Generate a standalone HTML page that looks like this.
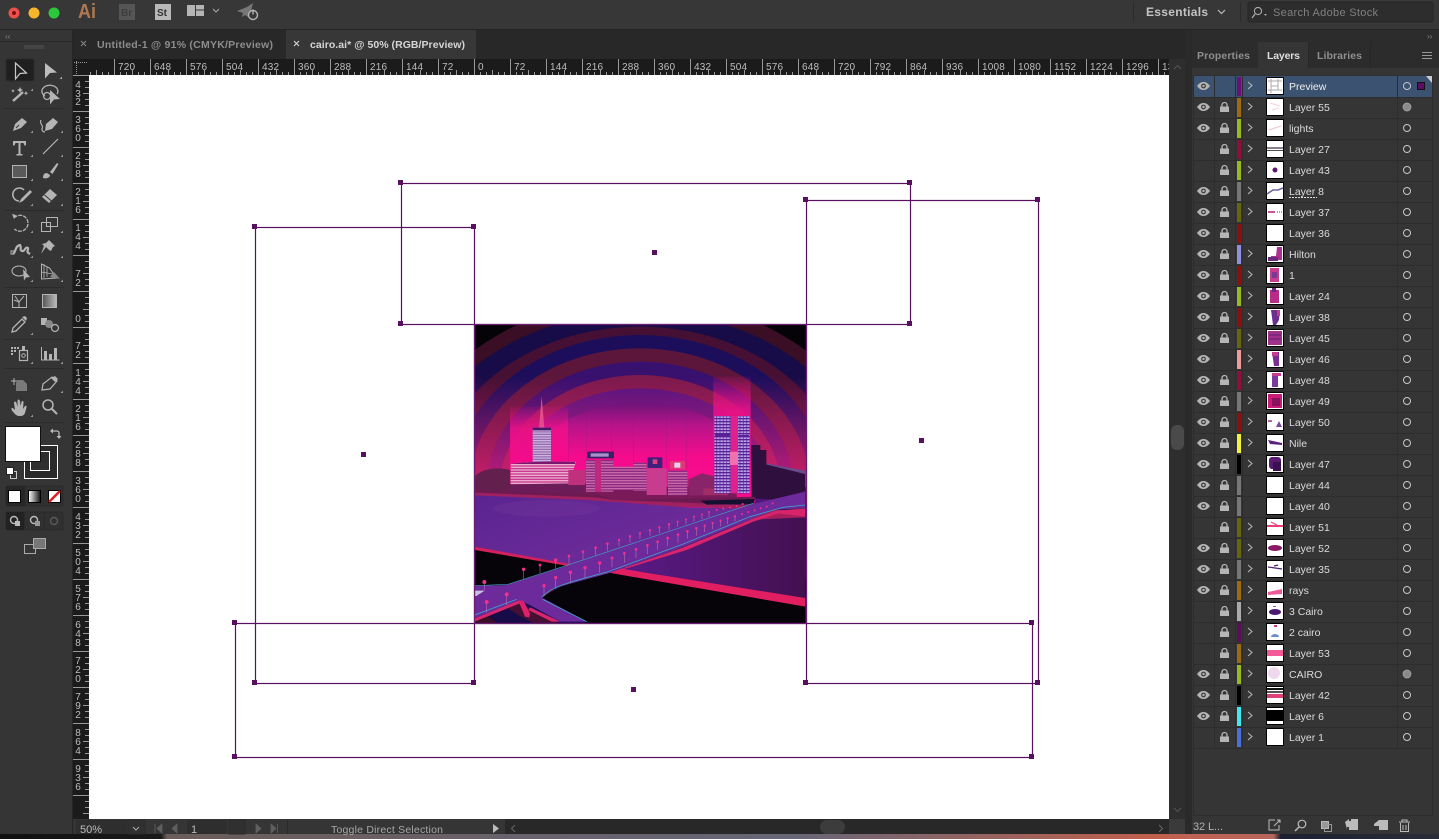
<!DOCTYPE html>
<html><head><meta charset="utf-8"><title>cairo.ai</title>
<style>html,body{margin:0;padding:0;background:#2a2a2a;overflow:hidden}svg{display:block}text{font-family:"Liberation Sans",sans-serif}</style></head>
<body>
<svg width="1439" height="839" viewBox="0 0 1439 839" xmlns="http://www.w3.org/2000/svg">
<defs>
<linearGradient id="desk" x1="0" x2="1" y1="0" y2="0"><stop offset="0" stop-color="#111"/><stop offset=".112" stop-color="#1a1a1a"/><stop offset=".116" stop-color="#6b5d5a"/><stop offset=".55" stop-color="#667"/><stop offset=".8" stop-color="#c0604c"/><stop offset=".885" stop-color="#b8655c"/><stop offset=".89" stop-color="#1c2030"/><stop offset="1" stop-color="#2a2c38"/></linearGradient>
<linearGradient id="grey" x1="0" x2="1" y1="0" y2="0"><stop offset="0" stop-color="#555"/><stop offset="1" stop-color="#bbb"/></linearGradient>
<linearGradient id="mg" x1="0" x2="1" y1="0" y2="0"><stop offset="0" stop-color="#fff"/><stop offset="1" stop-color="#111"/></linearGradient>
<linearGradient id="water" x1="0" x2="1" y1="0" y2="1"><stop offset="0" stop-color="#5a2490"/><stop offset=".5" stop-color="#6a2a98"/><stop offset="1" stop-color="#64187f"/></linearGradient>
<linearGradient id="water2" x1="0" x2="1" y1="0" y2="0"><stop offset="0" stop-color="#5a1a88"/><stop offset="1" stop-color="#431050"/></linearGradient>
<linearGradient id="beam" x1="0" x2="0" y1="0" y2="1"><stop offset="0" stop-color="#f0108a" stop-opacity=".1"/><stop offset=".35" stop-color="#f0108a" stop-opacity=".85"/><stop offset="1" stop-color="#f8088c"/></linearGradient>
<linearGradient id="glow" x1="0" x2="0" y1="0" y2="1"><stop offset="0" stop-color="#6a1478"/><stop offset=".14" stop-color="#b8148a"/><stop offset=".32" stop-color="#f40c8c"/><stop offset="1" stop-color="#ff0a90"/></linearGradient>
<linearGradient id="lift" x1="0" x2="0" y1="0" y2="1"><stop offset="0" stop-color="#e8207a" stop-opacity="0"/><stop offset="1" stop-color="#e8207a" stop-opacity=".8"/></linearGradient>
<pattern id="st1" width="4" height="5" patternUnits="userSpaceOnUse"><rect width="4" height="5" fill="#8a5aa8"/><rect y="0" width="4" height="2.5" fill="#d8c4e6"/></pattern>
<pattern id="st2" width="4" height="8" patternUnits="userSpaceOnUse"><rect width="4" height="8" fill="#c83c90"/><rect y="0" width="4" height="4" fill="#eeaccf"/></pattern>
<pattern id="st3" width="4" height="8" patternUnits="userSpaceOnUse"><rect width="4" height="8" fill="#8a2a80"/><rect y="0" width="4" height="4" fill="#cc68a8"/></pattern>
<pattern id="win" width="10" height="9" patternUnits="userSpaceOnUse"><rect width="10" height="9" fill="#5a2098"/><rect x="1" y="1" width="8" height="5" fill="#b8a4e4"/></pattern>
<pattern id="tickT" x="114" y="59" width="36" height="16" patternUnits="userSpaceOnUse"><path d="M.5 0V16M6.500 13V16M12.500 13V16M18.500 11V16M24.500 13V16M30.500 13V16" stroke="#999" fill="none"/></pattern>
<pattern id="tickL" x="73" y="75" width="16" height="36" patternUnits="userSpaceOnUse"><path d="M0 .5H16M12 6.500H16M12 12.500H16M10 18.500H16M12 24.500H16M12 30.500H16" stroke="#999" fill="none"/></pattern>
<clipPath id="artc"><rect x="475" y="325" width="331" height="298"/></clipPath>
<clipPath id="rulc"><rect x="89" y="59" width="1080" height="16"/></clipPath>
<clipPath id="rullc"><rect x="73" y="75" width="16" height="744"/></clipPath>
<symbol id="eye" viewBox="0 0 13 8" overflow="visible"><path d="M0 4C2.500 .6 4.600 0 6.500 0S10.500 .6 13 4C10.500 7.400 8.400 8 6.500 8S2.500 7.400 0 4Z" fill="#b5b5b5"/><circle cx="6.500" cy="4" r="2.400" fill="#3a3a3a"/><circle cx="6.500" cy="4" r="1.200" fill="#b5b5b5"/></symbol>
<symbol id="lock" viewBox="0 0 9 10" overflow="visible"><path d="M2 5V3a2.500 2.500 0 0 1 5 0V5" fill="none" stroke="#b5b5b5" stroke-width="1.300"/><rect x="0" y="4.500" width="9" height="5.500" fill="#b5b5b5"/></symbol>
</defs>

<rect width="1439" height="839" fill="#2a2a2a"/>
<!-- top bar -->
<rect width="1439" height="29" fill="#373737"/>
<rect y="29" width="1439" height="1" fill="#252525"/>
<circle cx="14" cy="13" r="5.500" fill="#f0504c"/><circle cx="14" cy="13" r="2" fill="#7a1010"/>
<circle cx="34" cy="13" r="5.500" fill="#f7b52c"/>
<circle cx="54" cy="13" r="5.500" fill="#2cc83c"/>
<text x="78" y="18" font-size="20" font-weight="bold" fill="#b07850" textLength="18" lengthAdjust="spacingAndGlyphs">Ai</text>
<rect x="119" y="4" width="16" height="16" fill="#555"/><text x="121" y="16" font-size="10" font-weight="bold" fill="#3c3c3c">Br</text>
<rect x="155" y="4" width="16" height="16" fill="#b8b8b8"/><text x="157" y="16" font-size="10" font-weight="bold" fill="#333">St</text>
<path d="M187 5h8v11h-8zM196 5h8v4.500h-8zM196 10.500h8v5.500h-8z" fill="#b5b5b5"/>
<path d="M213 9l3 3 3-3" fill="none" stroke="#aaa" stroke-width="1.100"/>
<path d="M237 11l10-4 6-4-2 8-3 6-3-2-3 2 1-4z" fill="#777"/>
<circle cx="253" cy="15" r="4.500" fill="#373737" stroke="#b5b5b5" stroke-width="1.400"/><path d="M253 9.500v5" stroke="#b5b5b5" stroke-width="1.400"/>
<rect x="1133" y="2" width="1" height="20" fill="#2c2c2c"/>
<text x="1146" y="16" font-size="12" font-weight="bold" fill="#c4c4c4" textLength="62">Essentials</text>
<path d="M1218 10l3.500 3.500 3.500-3.500" fill="none" stroke="#bbb" stroke-width="1.200"/>
<rect x="1240" y="2" width="1" height="20" fill="#2c2c2c"/>
<rect x="1248" y="2" width="185" height="20" rx="2" fill="#2d2d2d" stroke="#262626"/>
<circle cx="1258" cy="11" r="3.600" fill="none" stroke="#aaa" stroke-width="1.100"/><path d="M1255 14l-3 4" stroke="#aaa" stroke-width="1.300"/><path d="M1264 14h3l-1.500 2z" fill="#aaa"/>
<text x="1273" y="16" font-size="11" fill="#808080" textLength="105">Search Adobe Stock</text>

<!-- tab strip -->
<rect x="73" y="30" width="1112" height="29" fill="#282828"/>
<rect x="286" y="30" width="190" height="29" fill="#373737"/>
<path d="M81 41l5 5M86 41l-5 5" stroke="#888" stroke-width="1"/>
<text x="97" y="48" font-size="10.500" font-weight="bold" fill="#8d8d8d" textLength="176">Untitled-1 @ 91% (CMYK/Preview)</text>
<path d="M294 41l5 5M299 41l-5 5" stroke="#ddd" stroke-width="1"/>
<text x="310" y="48" font-size="10.500" font-weight="bold" fill="#d6d6d6" textLength="155">cairo.ai* @ 50% (RGB/Preview)</text>

<!-- left toolbar -->
<rect y="30" width="72" height="804" fill="#353535"/>
<rect x="72" y="30" width="1" height="804" fill="#262626"/>
<rect y="41" width="72" height="1" fill="#2a2a2a"/>
<text x="5" y="39" font-size="8" fill="#888">‹‹</text>
<path d="M25 45v4M27 45v4M29 45v4M31 45v4M33 45v4M35 45v4M37 45v4M39 45v4M41 45v4M43 45v4" stroke="#555" stroke-width="1"/>
<rect x="6" y="59" width="28" height="22" rx="2" fill="#1f1f1f" stroke="#2a2a2a"/>
<path d="M15.500 63L26.500 73 20 73.500 15.500 79Z" fill="none" stroke="#c8c8c8" stroke-width="1.200"/>
<path d="M45 63L57 72.500 50 73 45 78.500Z" fill="#bdbdbd"/><path d="M62 79h-2.500l2.500-2.500z" fill="#aaa"/>
<g fill="#b4b4b4" stroke="#b4b4b4">
<path d="M13 101l10-9" stroke-width="2.500" fill="none"/>
<path d="M20 87l1 2 2 1-2 1-1 2-1-2-2-1 2-1zM26 91l.7 1.500 1.500.7-1.500.7-.7 1.500-.7-1.500-1.500-.7 1.500-.7zM13 89l.6 1.300 1.300.6-1.300.6-.6 1.300-.6-1.300-1.300-.6 1.300-.6z" stroke="none"/>
<path d="M45 96a8 6 0 1 1 12-2" fill="none" stroke-width="1.300"/><circle cx="47" cy="96" r="3.500" fill="none" stroke-width="1.200"/>
<path d="M50 90l10 9-6 .5-4 5z" stroke="none"/>
<path d="M13 131l2-7 7-6 5 4-6 6-8 3z" stroke="none"/><path d="M16 128l3-3" stroke="#353535" stroke-width="1" fill="none"/>
<path d="M45 131l1-7 7-6 5 4-6 7-7 2z" stroke="none"/><path d="M41 120c-2 5 3 4 1 9 0 2 1 3 3 3" fill="none" stroke-width="1.200"/>
<path d="M13 141h13v4.500h-1.500l-1-2.500h-3v11h2v1.500h-6V154h2V143h-3l-1 2.500H13z" stroke="none"/>
<path d="M43 154l15-15" stroke-width="1.200" fill="none"/>
<rect x="12.500" y="165.500" width="14" height="12" fill="#5a5a5a"/>
<path d="M43 178c0-3 1-5 4-5l3 2c0 3-4 4-7 3z" stroke="none"/><path d="M50 172l7-9 1.500 1-6 10z" stroke="none"/>
<path d="M24 190a6.500 6.500 0 1 0-5 11" fill="none" stroke-width="1.600"/><path d="M19 203l2-4 9-9 2 2-9 9z" stroke="none"/>
<path d="M42 197l8-8 7 6-8 8z" stroke="none"/><path d="M44.500 195l7 6" stroke="#353535"/>
<path d="M14 218a8 8 0 1 1 .5 11" fill="none" stroke-width="1.300" stroke-dasharray="4 1"/><path d="M12 214l4 1-2 4z" stroke="none"/>
<rect x="41.500" y="222.500" width="9" height="9" fill="none"/><rect x="46.500" y="217.500" width="11" height="9" fill="none"/>
<path d="M13 254c3-2 2-8 7-9 2 3-1 5 2 6s3-5 6-3c1 3-3 3 2 6" fill="none" stroke-width="2.200"/><rect x="11" y="251" width="3" height="3" fill="none"/>
<path d="M49 240l6 6-2 1-2 4-2-1-3-3-5 7 3-8-2-2 4-1z" stroke="none"/>
<ellipse cx="19" cy="271" rx="7" ry="5" fill="none" stroke-width="1.100"/><path d="M23 269l7 8-4 .5-2 3z" stroke="none"/>
<path d="M41.500 264v15l15-1-7-10z" fill="none" stroke-width="1"/><path d="M44 264v14M47 267v10M41 272l12 2" fill="none" stroke-width=".8"/><path d="M50 277l4-5 6 7z" stroke="none" fill="#888"/>
</g>
<rect x="12.500" y="294.500" width="14" height="13" fill="none" stroke="#b4b4b4"/><path d="M14 300l5 2 5-6M19 302v5M15 296l4 6" stroke="#b4b4b4" fill="none"/>
<rect x="42.500" y="294.500" width="14" height="13" fill="url(#grey)" stroke="#b4b4b4"/>
<g fill="#b4b4b4" stroke="#b4b4b4">
<path d="M12 332l1-4 9-9 3 3-9 9z" fill="none" stroke-width="1.300"/><path d="M22 317l3-1 2 2-1 3z" stroke="none"/>
<rect x="41" y="318" width="6" height="7" stroke="none"/><circle cx="49" cy="324" r="4" stroke="none" fill="#888"/><circle cx="55" cy="328" r="3.500" fill="#353535" stroke-width="1.200"/>
<path d="M11 347h2v2h-2zM14 347h2v2h-2zM17 347h2v2h-2zM11 350h2v2h-2zM14 350h2v2h-2zM11 353h2v2h-2z" stroke="none"/>
<rect x="19.500" y="350.500" width="8" height="10" fill="#353535" stroke-width="1.200"/><circle cx="23.500" cy="355.500" r="1.800" fill="none"/><rect x="22" y="346" width="3" height="4" stroke="none"/>
<path d="M41.500 347v13h18" fill="none"/><path d="M44 351h3v9h-3zM49 354h3v6h-3zM54 348h3v12h-3z" stroke="none"/>
<path d="M11 381h7M14 378v7" fill="none" stroke-width="1"/><path d="M18 380h5l4 4v7h-11v-8z" stroke="none" fill="#7a7a7a"/>
<path d="M42 390l1-6 9-7 5 4-7 8z" fill="none" stroke-width="1.200"/><path d="M51 378l4-2 3 3-3 3z" stroke="none"/>
<path d="M14 413c-3-3-3-5-2-5s2 1 3 2l-1-7c0-2 2-2 2.500 0l1 4 0-6c0-2 2-2 2.500 0l.5 5 1-4c.5-2 2.500-1 2 1l-.5 6 2-3c1-1 2 0 1.500 1.500L25 413c-1 2-2 3-5 3s-4-1-6-3z" stroke="none"/>
<circle cx="48" cy="405" r="5" fill="none" stroke-width="1.500"/><path d="M52 409l5 5" stroke-width="2" fill="none"/>
</g>
<g fill="#999"><path d="M33 91h-2.500l2.500-2.500zM33 133h-2.500l2.500-2.500zM63 133h-2.500l2.500-2.500zM33 157h-2.500l2.500-2.500zM63 157h-2.500l2.500-2.500zM33 181h-2.500l2.500-2.500zM63 181h-2.500l2.500-2.500zM33 206h-2.500l2.500-2.500zM63 206h-2.500l2.500-2.500zM33 233h-2.500l2.500-2.500zM63 233h-2.500l2.500-2.500zM33 258h-2.500l2.500-2.500zM63 258h-2.500l2.500-2.500zM33 282h-2.500l2.500-2.500zM63 282h-2.500l2.500-2.500zM33 335h-2.500l2.500-2.500zM33 364h-2.500l2.500-2.500zM63 364h-2.500l2.500-2.500zM63 393h-2.500l2.500-2.500zM33 417h-2.500l2.500-2.500z"/></g>
<path d="M4 108.500h60M4 210.500h60M4 287.500h60M4 339.500h60M4 368.500h60M4 422.500h60" stroke="#2b2b2b"/>
<!-- swatches -->
<rect x="24.500" y="445.500" width="33" height="33" fill="#2a2a2a" stroke="#fff" stroke-width="1"/>
<rect x="30.500" y="451.500" width="19" height="19" fill="#2f2f2f" stroke="#fff"/>
<rect x="5.500" y="426.500" width="35" height="35" fill="#fff" stroke="#111"/>
<path d="M51 431h6a2 2 0 0 1 2 2v4" fill="none" stroke="#bbb" stroke-width="1.300"/><path d="M50 431l3-2.500v5zM59 439l-2.500-3h5z" fill="#bbb"/>
<rect x="10.500" y="471.500" width="6" height="7" fill="none" stroke="#ccc"/><rect x="6.500" y="467.500" width="7" height="7" fill="#fff" stroke="#222"/>
<rect x="6" y="486" width="57" height="20" rx="2" fill="#303030" stroke="#2a2a2a"/>
<rect x="6" y="486" width="19" height="20" fill="#262626"/>
<rect x="8.500" y="490.500" width="12" height="12" fill="#fff" stroke="#000"/>
<rect x="28.500" y="490.500" width="12" height="12" fill="url(#mg)" stroke="#000"/>
<rect x="48.500" y="490.500" width="12" height="12" fill="#fff" stroke="#000"/><path d="M49 502l11-11" stroke="#e02020" stroke-width="2.500"/>
<rect x="6" y="512" width="57" height="18" rx="2" fill="#303030" stroke="#2a2a2a"/>
<rect x="6" y="512" width="18" height="18" fill="#222"/>
<path d="M24.500 512v18M44.500 512v18" stroke="#2a2a2a"/>
<circle cx="14" cy="520" r="3.500" fill="none" stroke="#bbb" stroke-width="1.400"/><rect x="15" y="521" width="5" height="5" fill="#bbb"/>
<circle cx="34" cy="520" r="3.500" fill="none" stroke="#bbb" stroke-width="1.400"/><rect x="35" y="521" width="5" height="5" fill="#999"/>
<circle cx="54" cy="521" r="3.500" fill="none" stroke="#5a5a5a" stroke-width="1.400"/>
<rect x="24.500" y="544.500" width="11" height="9" fill="none" stroke="#aaa"/><rect x="33.500" y="538.500" width="12" height="10" fill="#777" stroke="#aaa"/>

<!-- rulers -->
<rect x="73" y="59" width="1096" height="16" fill="#1b1b1b"/>
<rect x="73" y="75" width="16" height="744" fill="#1b1b1b"/>
<rect x="89" y="59" width="1080" height="16" fill="url(#tickT)"/>
<rect x="73" y="75" width="16" height="744" fill="url(#tickL)"/>
<path d="M74 62.500h14M76.500 61v13" stroke="#999" stroke-dasharray="1 1" fill="none"/>
<g font-size="10" fill="#bdbdbd" clip-path="url(#rulc)" letter-spacing=".2">
<text x="118" y="70">720</text><text x="154" y="70">648</text><text x="190" y="70">576</text><text x="226" y="70">504</text><text x="262" y="70">432</text><text x="298" y="70">360</text><text x="334" y="70">288</text><text x="370" y="70">216</text><text x="406" y="70">144</text><text x="442" y="70">72</text><text x="478" y="70">0</text><text x="514" y="70">72</text><text x="550" y="70">144</text><text x="586" y="70">216</text><text x="622" y="70">288</text><text x="658" y="70">360</text><text x="694" y="70">432</text><text x="730" y="70">504</text><text x="766" y="70">576</text><text x="802" y="70">648</text><text x="838" y="70">720</text><text x="874" y="70">792</text><text x="910" y="70">864</text><text x="946" y="70">936</text><text x="982" y="70">1008</text><text x="1018" y="70">1080</text><text x="1054" y="70">1152</text><text x="1090" y="70">1224</text><text x="1126" y="70">1296</text><text x="1162" y="70">1368</text>
</g>
<g font-size="10" fill="#bdbdbd" text-anchor="middle" clip-path="url(#rullc)">
<text x="78" y="88">4</text><text x="78" y="97">3</text><text x="78" y="105">2</text>
<text x="78" y="123">3</text><text x="78" y="132">6</text><text x="78" y="141">0</text>
<text x="78" y="159">2</text><text x="78" y="168">8</text><text x="78" y="177">8</text>
<text x="78" y="195">2</text><text x="78" y="204">1</text><text x="78" y="213">6</text>
<text x="78" y="231">1</text><text x="78" y="240">4</text><text x="78" y="249">4</text>
<text x="78" y="277">7</text><text x="78" y="286">2</text>
<text x="78" y="322">0</text>
<text x="78" y="349">7</text><text x="78" y="358">2</text>
<text x="78" y="376">1</text><text x="78" y="385">4</text><text x="78" y="394">4</text>
<text x="78" y="412">2</text><text x="78" y="421">1</text><text x="78" y="430">6</text>
<text x="78" y="448">2</text><text x="78" y="457">8</text><text x="78" y="466">8</text>
<text x="78" y="484">3</text><text x="78" y="493">6</text><text x="78" y="502">0</text>
<text x="78" y="520">4</text><text x="78" y="529">3</text><text x="78" y="538">2</text>
<text x="78" y="556">5</text><text x="78" y="565">0</text><text x="78" y="574">4</text>
<text x="78" y="592">5</text><text x="78" y="601">7</text><text x="78" y="610">6</text>
<text x="78" y="628">6</text><text x="78" y="637">4</text><text x="78" y="646">8</text>
<text x="78" y="664">7</text><text x="78" y="673">2</text><text x="78" y="682">0</text>
<text x="78" y="700">7</text><text x="78" y="709">9</text><text x="78" y="718">2</text>
<text x="78" y="736">8</text><text x="78" y="745">6</text><text x="78" y="754">4</text>
<text x="78" y="772">9</text><text x="78" y="781">3</text><text x="78" y="790">6</text>
</g>

<!-- canvas -->
<rect x="89" y="75" width="1080" height="744" fill="#fff"/>

<!-- artwork, drawn in 3x zoom coordinates -->
<g clip-path="url(#artc)"><g transform="translate(470 320) scale(.33333)">
<rect x="0" y="0" width="1020" height="930" fill="#050308"/>
<ellipse cx="510" cy="500" rx="720" ry="565" fill="#3a0f26"/>
<ellipse cx="510" cy="500" rx="680" ry="525" fill="#180c48"/>
<ellipse cx="510" cy="500" rx="610" ry="480" fill="#451034"/>
<ellipse cx="510" cy="500" rx="560" ry="455" fill="#1c0e5a"/>
<ellipse cx="510" cy="500" rx="510" ry="415" fill="#5c163c"/>
<ellipse cx="510" cy="500" rx="460" ry="375" fill="#38106e"/>
<ellipse cx="510" cy="500" rx="420" ry="335" fill="#7c1a4c"/>
<ellipse cx="510" cy="500" rx="390" ry="295" fill="#54147e"/>
<rect x="0" y="170" width="1020" height="330" fill="url(#lift)"/>
<ellipse cx="510" cy="500" rx="350" ry="255" fill="url(#glow)"/>
<rect x="120" y="260" width="175" height="190" fill="url(#beam)"/>
<rect x="730" y="170" width="112" height="290" fill="url(#beam)"/>
<path d="M295 270v180M350 255v190M425 260v180M490 250v190M590 260v180M650 265v180" stroke="#8a1a78" stroke-width="1.500" opacity=".45" fill="none"/>
<!-- right dark -->
<path d="M843 375h28v15h18v40l116 25v90l-160-10z" fill="#2e0f3e"/>
<path d="M890 430l115 22v10l-115-28z" fill="#6a4a8a"/>
<!-- tree + shore -->
<path d="M14 470c20-25 70-30 106-20v62H14z" fill="#63204f"/>
<path d="M120 490h230v30H120z" fill="#6c1c58"/>
<rect x="340" y="500" width="460" height="45" fill="#7a1a58"/>
<!-- left tower -->
<path d="M215 228l-8 97h16z" fill="#e04c8c"/>
<rect x="188" y="323" width="55" height="107" fill="url(#st1)"/>
<rect x="188" y="323" width="55" height="8" fill="#46186a"/>
<path d="M122 432c40-8 150-8 196-6l-22 64-174 3z" fill="url(#st2)"/>
<path d="M125 432c40-8 150-8 190-6v6H125z" fill="#7a1870"/>
<rect x="295" y="450" width="50" height="45" fill="#c0307c"/>
<rect x="348" y="420" width="82" height="95" fill="url(#st3)"/>
<rect x="375" y="420" width="18" height="95" fill="#c02880"/>
<rect x="352" y="395" width="80" height="20" rx="2" fill="#3a2068"/><rect x="362" y="400" width="54" height="10" fill="#a890c8"/>
<rect x="428" y="440" width="62" height="70" fill="url(#st3)"/>
<rect x="490" y="428" width="40" height="85" fill="url(#st3)"/>
<rect x="530" y="445" width="60" height="80" fill="#c83c90"/>
<rect x="533" y="412" width="44" height="32" fill="#40207a"/><rect x="548" y="418" width="14" height="14" fill="#e04080"/>
<rect x="594" y="452" width="58" height="74" fill="url(#st3)"/>
<rect x="600" y="423" width="45" height="25" fill="#e03878"/><rect x="613" y="428" width="18" height="15" fill="#e8d0f0"/>
<path d="M655 478l40-18 35 8 45 20v38H655z" fill="#8a2468"/>
<rect x="700" y="505" width="75" height="20" fill="#a02c68"/>
<!-- big tower -->
<rect x="733" y="288" width="106" height="232" fill="url(#win)"/>
<rect x="782" y="288" width="22" height="232" fill="#e0208c"/>
<rect x="735" y="340" width="45" height="8" fill="#5a2098"/><rect x="805" y="345" width="32" height="6" fill="#5a2098"/>
<rect x="780" y="395" width="24" height="40" fill="#f070b0"/>
<!-- shore -->
<path d="M14 508l120 8 240 4 60 20 270 -6 150 -4 -8 30 -500 -8 -332 -18z" fill="#6e1a52"/>
<path d="M14 518l360 14 60 8 270 10 150 8 -4 8 -300 -8 -180 -14 -356 -14z" fill="#a02060"/>
<path d="M690 542l165-5-5 15-140 2z" fill="#151030"/>
<!-- water -->
<path d="M14 526l340 14 300 22 200 4 0 30-400 150-440 60z" fill="url(#water)"/>
<ellipse cx="230" cy="565" rx="160" ry="25" fill="#8a4aa8" opacity=".18"/>
<path d="M14 680l285 55-190 60-95 3z" fill="#060408"/>
<path d="M14 680l285 52-4 6-281-48z" fill="#d4205c"/>
<!-- right water -->
<path d="M450 745l390-145 165-12v250z" fill="url(#water2)"/>
<path d="M830 570h175v22l-175 8z" fill="#a81e5c"/>
<path d="M415 758l35-12 555 88v26z" fill="#e01e60"/>
<path d="M215 835c50-40 130-65 200-77l590 102v50H350z" fill="#060408"/>
<path d="M14 800h110l30 40-140 60z" fill="#060408"/>
<!-- bridge -->
<path d="M14 800L110 795 300 735 850 552 1005 515V565L920 568 840 598 640 680 415 760 250 805 215 832 350 905H270L180 855 150 842 14 895Z" fill="#6c2a9a"/>
<path d="M450 748L640 682 840 600 920 572 1005 566V590L925 580 850 605 650 690 470 745Z" fill="#d8246a"/>
<path d="M14 895L145 842 150 850 14 905ZM180 862L270 905H245L175 870Z" fill="#d8266c"/>
<path d="M145 842h15l20 38-2 12-13-2z" fill="#e0206a"/>
<path d="M14 885l126-47M215 832c30-30 60-40 200-77L640 672 840 590 940 562 1005 555M218 838l132 67" fill="none" stroke="#3ca4c8" stroke-width="2.500"/>
<path d="M14 797l100-4 186-60 550-183" fill="none" stroke="#3ca4c8" stroke-width="2"/>
<path d="M14 812h30l-25 16h-5z" fill="#c8c0e0"/>
<!-- lamps -->
<g fill="#f03090" stroke="none">
<circle cx="43" cy="786" r="6"/><circle cx="161" cy="748" r="5"/><circle cx="210" cy="735" r="4"/><circle cx="257" cy="720" r="5"/><circle cx="297" cy="708" r="4"/><circle cx="339" cy="695" r="4"/><circle cx="377" cy="683" r="4"/><circle cx="412" cy="671" r="4"/><circle cx="447" cy="660" r="3.500"/><circle cx="480" cy="649" r="3.500"/><circle cx="510" cy="640" r="3.500"/><circle cx="540" cy="631" r="3.500"/><circle cx="568" cy="622" r="3.500"/><circle cx="597" cy="613" r="3.500"/><circle cx="623" cy="605" r="3"/><circle cx="648" cy="598" r="3"/><circle cx="672" cy="590" r="3"/><circle cx="696" cy="583" r="3"/><circle cx="717" cy="576" r="3"/><circle cx="740" cy="570" r="3"/><circle cx="760" cy="566" r="3"/><circle cx="780" cy="562" r="3"/><circle cx="800" cy="558" r="3"/><circle cx="818" cy="552" r="3"/>
<circle cx="50" cy="846" r="6"/><circle cx="110" cy="823" r="6"/><circle cx="222" cy="797" r="5"/><circle cx="257" cy="773" r="5"/><circle cx="301" cy="757" r="5"/><circle cx="345" cy="743" r="5"/><circle cx="389" cy="729" r="5"/><circle cx="426" cy="714" r="4"/><circle cx="463" cy="700" r="4"/><circle cx="498" cy="688" r="4"/><circle cx="532" cy="676" r="4"/><circle cx="563" cy="665" r="4"/><circle cx="593" cy="654" r="4"/><circle cx="624" cy="644" r="4"/><circle cx="652" cy="634" r="4"/><circle cx="679" cy="625" r="4"/><circle cx="704" cy="617" r="3.500"/><circle cx="728" cy="609" r="3.500"/><circle cx="752" cy="602" r="3.500"/><circle cx="773" cy="595" r="3.500"/><circle cx="795" cy="589" r="3.500"/><circle cx="816" cy="582" r="3"/><circle cx="835" cy="576" r="3"/><circle cx="854" cy="571" r="3"/><circle cx="872" cy="565" r="3"/><circle cx="890" cy="560" r="3"/><circle cx="908" cy="550" r="3"/>
</g>
<path d="M43 790v20M161 752v25M210 738v22M257 724v22M297 711v22M339 698v20M377 686v20M412 674v18M447 663v16M480 652v16M510 643v14M540 634v14M568 625v14M597 616v14M623 608v12M648 601v12M672 593v12M696 586v12M717 579v12M50 852v26M110 829v26M222 802v26M257 778v28M301 762v26M345 748v26M389 734v24M426 718v24M463 704v24M498 692v22M532 680v22M563 669v20M593 658v20M624 648v20M652 638v18M679 629v18M704 620v16M728 612v16M752 605v14M773 598v14M795 592v12" stroke="#d890c0" stroke-width="1.300" fill="none"/>
</g></g>

<!-- selection boxes -->
<g fill="none" stroke="#5a1060" stroke-width="1.200">
<rect x="401.500" y="183.500" width="509" height="141"/>
<rect x="806.500" y="200.500" width="232" height="483"/>
<rect x="255.500" y="227.500" width="219" height="456"/>
<rect x="235.500" y="623.500" width="797" height="134"/>
<rect x="474.500" y="324.500" width="332" height="299" stroke="#6a2070"/>
</g>
<g fill="#5a1060">
<rect x="398" y="180" width="5" height="5"/><rect x="907" y="180" width="5" height="5"/><rect x="398" y="321" width="5" height="5"/><rect x="907" y="321" width="5" height="5"/><rect x="652" y="250" width="5" height="5"/>
<rect x="803" y="197" width="5" height="5"/><rect x="1035" y="197" width="5" height="5"/><rect x="803" y="680" width="5" height="5"/><rect x="1035" y="680" width="5" height="5"/><rect x="919" y="438" width="5" height="5"/>
<rect x="252" y="224" width="5" height="5"/><rect x="471" y="224" width="5" height="5"/><rect x="252" y="680" width="5" height="5"/><rect x="471" y="680" width="5" height="5"/><rect x="361" y="452" width="5" height="5"/>
<rect x="232" y="620" width="5" height="5"/><rect x="1029" y="620" width="5" height="5"/><rect x="232" y="754" width="5" height="5"/><rect x="1029" y="754" width="5" height="5"/><rect x="631" y="687" width="5" height="5"/>
</g>

<!-- vertical scrollbar -->
<rect x="1169" y="59" width="16" height="760" fill="#2e2e2e"/>
<rect x="1185" y="30" width="7" height="804" fill="#2a2a2a"/>
<path d="M1174 69l3.500-3.500 3.500 3.500M1174 808l3.500 3.500 3.500-3.500" fill="none" stroke="#555" stroke-width="1"/>
<rect x="1171" y="425" width="13" height="25" rx="6" fill="#4a4a4a"/>

<!-- bottom bar -->
<rect x="73" y="819" width="1096" height="15" fill="#282828"/>
<rect x="73" y="819" width="432" height="15" fill="#353535"/>
<rect x="1169" y="819" width="16" height="15" fill="#3a3a3a"/>
<rect y="834" width="1439" height="5" fill="url(#desk)"/>
<rect x="76" y="820" width="51" height="14" fill="#2e2e2e"/><rect x="128" y="820" width="17" height="14" fill="#303030" stroke="#2a2a2a"/>
<text x="80" y="833" font-size="11" fill="#bbb">50%</text>
<path d="M133 827l3 3 3-3M233 827l3 3 3-3" fill="none" stroke="#aaa"/>
<path d="M155 824v9M157 828.500l5-4.500v9zM172 828.500l5-4.500v9z" fill="#5f5f5f" stroke="#5f5f5f" stroke-width=".8"/>
<rect x="187" y="820" width="40" height="14" fill="#2e2e2e"/><rect x="229" y="820" width="16" height="14" fill="#303030" stroke="#2a2a2a"/>
<text x="191" y="833" font-size="11" fill="#bbb">1</text>
<path d="M256 824l5 4.500-5 4.500zM271 824l5 4.500-5 4.500zM277.500 824v9" fill="#5f5f5f" stroke="#5f5f5f" stroke-width=".8"/>
<path d="M287.500 820v14" stroke="#2a2a2a"/>
<text x="331" y="833" font-size="10.500" fill="#a8a8a8" textLength="112">Toggle Direct Selection</text>
<path d="M493 824l6 4.500-6 4.500z" fill="#bbb"/>
<path d="M515 825l-3.500 3.500 3.500 3.500M1159 825l3.500 3.500-3.500 3.500" fill="none" stroke="#666"/>
<rect x="820" y="820" width="25" height="14" rx="7" fill="#3c3c3c"/>

<!-- right panel -->
<rect x="1192" y="30" width="247" height="804" fill="#353535"/>
<rect x="1192" y="30" width="247" height="12" fill="#2c2c2c"/>
<text x="1427" y="39" font-size="8" fill="#888">››</text>
<rect x="1192" y="42" width="247" height="26" fill="#2c2c2c"/>
<rect x="1258" y="42" width="50" height="27" fill="#353535"/>
<path d="M1308.500 42v26M1370.500 42v26" stroke="#262626"/>
<text x="1197" y="59" font-size="10.500" font-weight="bold" fill="#8f8f8f" textLength="53">Properties</text>
<text x="1267" y="59" font-size="10.500" font-weight="bold" fill="#dedede" textLength="33">Layers</text>
<text x="1317" y="59" font-size="10.500" font-weight="bold" fill="#8f8f8f" textLength="45">Libraries</text>
<path d="M1422 52.500h10M1422 55.500h10M1422 58.500h10" stroke="#999"/>
<rect x="1193.500" y="75.500" width="238" height="1" fill="#2b2b2b"/>
<rect x="1194" y="76" width="238" height="21" fill="#3b5270"/>
<path d="M1432 76v7l-6-7z" fill="#ccc"/>
<!-- row lines -->
<path d="M1194 97.500h238M1194 118.500h238M1194 139.500h238M1194 160.500h238M1194 181.500h238M1194 202.500h238M1194 223.500h238M1194 244.500h238M1194 265.500h238M1194 286.500h238M1194 307.500h238M1194 328.500h238M1194 349.500h238M1194 370.500h238M1194 391.500h238M1194 412.500h238M1194 433.500h238M1194 454.500h238M1194 475.500h238M1194 496.500h238M1194 517.500h238M1194 538.500h238M1194 559.500h238M1194 580.500h238M1194 601.500h238M1194 622.500h238M1194 643.500h238M1194 664.500h238M1194 685.500h238M1194 706.500h238M1194 727.500h238M1194 748.500h238" stroke="#2d2d2d"/>
<path d="M1193.500 76v740M1214.500 76v672M1235.500 76v672M1242.500 76v672M1397.500 76v672M1432.500 76v740M1194 815.500h238" stroke="#2d2d2d" fill="none"/>
<!-- colour bars -->
<g>
<rect x="1237" y="77" width="4" height="19" fill="#6b0f7a"/><rect x="1237" y="98" width="4" height="19" fill="#9c6a12"/><rect x="1237" y="119" width="4" height="19" fill="#97b81e"/><rect x="1237" y="140" width="4" height="19" fill="#8f0f3c"/><rect x="1237" y="161" width="4" height="19" fill="#97b81e"/><rect x="1237" y="182" width="4" height="19" fill="#777"/><rect x="1237" y="203" width="4" height="19" fill="#66660f"/><rect x="1237" y="224" width="4" height="19" fill="#8a0f0f"/><rect x="1237" y="245" width="4" height="19" fill="#9090e0"/><rect x="1237" y="266" width="4" height="19" fill="#8a0f0f"/><rect x="1237" y="287" width="4" height="19" fill="#97b81e"/><rect x="1237" y="308" width="4" height="19" fill="#8a0f0f"/><rect x="1237" y="329" width="4" height="19" fill="#66660f"/><rect x="1237" y="350" width="4" height="19" fill="#f09a9a"/><rect x="1237" y="371" width="4" height="19" fill="#8f0f3c"/><rect x="1237" y="392" width="4" height="19" fill="#777"/><rect x="1237" y="413" width="4" height="19" fill="#8a0f0f"/><rect x="1237" y="434" width="4" height="19" fill="#f2f23c"/><rect x="1237" y="455" width="4" height="19" fill="#000"/><rect x="1237" y="476" width="4" height="19" fill="#777"/><rect x="1237" y="497" width="4" height="19" fill="#777"/><rect x="1237" y="518" width="4" height="19" fill="#66660f"/><rect x="1237" y="539" width="4" height="19" fill="#66660f"/><rect x="1237" y="560" width="4" height="19" fill="#777"/><rect x="1237" y="581" width="4" height="19" fill="#9c6a12"/><rect x="1237" y="602" width="4" height="19" fill="#aaa"/><rect x="1237" y="623" width="4" height="19" fill="#5a0f5a"/><rect x="1237" y="644" width="4" height="19" fill="#9c6a12"/><rect x="1237" y="665" width="4" height="19" fill="#97b81e"/><rect x="1237" y="686" width="4" height="19" fill="#000"/><rect x="1237" y="707" width="4" height="19" fill="#40e8f0"/><rect x="1237" y="728" width="4" height="19" fill="#4a70d8"/>
</g>
<!-- eyes -->
<g>
<use href="#eye" x="1197" y="82" width="13" height="8"/><use href="#eye" x="1197" y="103" width="13" height="8"/><use href="#eye" x="1197" y="124" width="13" height="8"/><use href="#eye" x="1197" y="187" width="13" height="8"/><use href="#eye" x="1197" y="208" width="13" height="8"/><use href="#eye" x="1197" y="229" width="13" height="8"/><use href="#eye" x="1197" y="250" width="13" height="8"/><use href="#eye" x="1197" y="271" width="13" height="8"/><use href="#eye" x="1197" y="292" width="13" height="8"/><use href="#eye" x="1197" y="313" width="13" height="8"/><use href="#eye" x="1197" y="334" width="13" height="8"/><use href="#eye" x="1197" y="355" width="13" height="8"/><use href="#eye" x="1197" y="376" width="13" height="8"/><use href="#eye" x="1197" y="397" width="13" height="8"/><use href="#eye" x="1197" y="418" width="13" height="8"/><use href="#eye" x="1197" y="439" width="13" height="8"/><use href="#eye" x="1197" y="460" width="13" height="8"/><use href="#eye" x="1197" y="481" width="13" height="8"/><use href="#eye" x="1197" y="502" width="13" height="8"/><use href="#eye" x="1197" y="544" width="13" height="8"/><use href="#eye" x="1197" y="565" width="13" height="8"/><use href="#eye" x="1197" y="586" width="13" height="8"/><use href="#eye" x="1197" y="670" width="13" height="8"/><use href="#eye" x="1197" y="691" width="13" height="8"/><use href="#eye" x="1197" y="712" width="13" height="8"/>
</g>
<!-- locks -->
<g>
<use href="#lock" x="1220" y="102" width="9" height="10"/><use href="#lock" x="1220" y="123" width="9" height="10"/><use href="#lock" x="1220" y="144" width="9" height="10"/><use href="#lock" x="1220" y="165" width="9" height="10"/><use href="#lock" x="1220" y="186" width="9" height="10"/><use href="#lock" x="1220" y="207" width="9" height="10"/><use href="#lock" x="1220" y="228" width="9" height="10"/><use href="#lock" x="1220" y="249" width="9" height="10"/><use href="#lock" x="1220" y="270" width="9" height="10"/><use href="#lock" x="1220" y="291" width="9" height="10"/><use href="#lock" x="1220" y="312" width="9" height="10"/><use href="#lock" x="1220" y="333" width="9" height="10"/><use href="#lock" x="1220" y="375" width="9" height="10"/><use href="#lock" x="1220" y="396" width="9" height="10"/><use href="#lock" x="1220" y="417" width="9" height="10"/><use href="#lock" x="1220" y="438" width="9" height="10"/><use href="#lock" x="1220" y="459" width="9" height="10"/><use href="#lock" x="1220" y="480" width="9" height="10"/><use href="#lock" x="1220" y="501" width="9" height="10"/><use href="#lock" x="1220" y="522" width="9" height="10"/><use href="#lock" x="1220" y="543" width="9" height="10"/><use href="#lock" x="1220" y="564" width="9" height="10"/><use href="#lock" x="1220" y="585" width="9" height="10"/><use href="#lock" x="1220" y="606" width="9" height="10"/><use href="#lock" x="1220" y="627" width="9" height="10"/><use href="#lock" x="1220" y="648" width="9" height="10"/><use href="#lock" x="1220" y="669" width="9" height="10"/><use href="#lock" x="1220" y="690" width="9" height="10"/><use href="#lock" x="1220" y="711" width="9" height="10"/><use href="#lock" x="1220" y="732" width="9" height="10"/>
</g>
<!-- chevrons -->
<path d="M1248 82l4 3.500-4 3.500M1248 103l4 3.500-4 3.500M1248 124l4 3.500-4 3.500M1248 145l4 3.500-4 3.500M1248 166l4 3.500-4 3.500M1248 187l4 3.500-4 3.500M1248 208l4 3.500-4 3.500M1248 250l4 3.500-4 3.500M1248 271l4 3.500-4 3.500M1248 292l4 3.500-4 3.500M1248 313l4 3.500-4 3.500M1248 334l4 3.500-4 3.500M1248 355l4 3.500-4 3.500M1248 376l4 3.500-4 3.500M1248 397l4 3.500-4 3.500M1248 418l4 3.500-4 3.500M1248 439l4 3.500-4 3.500M1248 460l4 3.500-4 3.500M1248 523l4 3.500-4 3.500M1248 544l4 3.500-4 3.500M1248 565l4 3.500-4 3.500M1248 586l4 3.500-4 3.500M1248 607l4 3.500-4 3.500M1248 628l4 3.500-4 3.500M1248 649l4 3.500-4 3.500M1248 670l4 3.500-4 3.500M1248 691l4 3.500-4 3.500M1248 712l4 3.500-4 3.500M1248 733l4 3.500-4 3.500" fill="none" stroke="#bbb" stroke-width="1"/>
<!-- thumbnails -->
<g fill="#fff" stroke="#000" stroke-width="1">
<rect x="1266.500" y="77.500" width="17" height="17"/><rect x="1266.500" y="98.500" width="17" height="17"/><rect x="1266.500" y="119.500" width="17" height="17"/><rect x="1266.500" y="140.500" width="17" height="17"/><rect x="1266.500" y="161.500" width="17" height="17"/><rect x="1266.500" y="182.500" width="17" height="17"/><rect x="1266.500" y="203.500" width="17" height="17"/><rect x="1266.500" y="224.500" width="17" height="17"/><rect x="1266.500" y="245.500" width="17" height="17"/><rect x="1266.500" y="266.500" width="17" height="17"/><rect x="1266.500" y="287.500" width="17" height="17"/><rect x="1266.500" y="308.500" width="17" height="17"/><rect x="1266.500" y="329.500" width="17" height="17"/><rect x="1266.500" y="350.500" width="17" height="17"/><rect x="1266.500" y="371.500" width="17" height="17"/><rect x="1266.500" y="392.500" width="17" height="17"/><rect x="1266.500" y="413.500" width="17" height="17"/><rect x="1266.500" y="434.500" width="17" height="17"/><rect x="1266.500" y="455.500" width="17" height="17"/><rect x="1266.500" y="476.500" width="17" height="17"/><rect x="1266.500" y="497.500" width="17" height="17"/><rect x="1266.500" y="518.500" width="17" height="17"/><rect x="1266.500" y="539.500" width="17" height="17"/><rect x="1266.500" y="560.500" width="17" height="17"/><rect x="1266.500" y="581.500" width="17" height="17"/><rect x="1266.500" y="602.500" width="17" height="17"/><rect x="1266.500" y="623.500" width="17" height="17"/><rect x="1266.500" y="644.500" width="17" height="17"/><rect x="1266.500" y="665.500" width="17" height="17"/><rect x="1266.500" y="686.500" width="17" height="17"/><rect x="1266.500" y="707.500" width="17" height="17"/><rect x="1266.500" y="728.500" width="17" height="17"/>
</g>
<g>
<path d="M1268 81h14M1268 90h14M1271 79v14M1278 79v11M1271 86h7" stroke="#aaa" fill="none"/>
<path d="M1270 103l10 3M1272 110l7-2" stroke="#f0d0e0" fill="none"/>
<path d="M1269 130l12-4" stroke="#f0c0d8" fill="none"/>
<rect x="1267" y="147" width="16" height="2" fill="#8a8090"/><rect x="1267" y="150" width="16" height="1" fill="#555"/>
<circle cx="1275" cy="170" r="2.500" fill="#5a1a6a"/>
<path d="M1267 194l6-4 5 0 5-2" stroke="#7060a0" stroke-width="1.500" fill="none"/>
<path d="M1268 212h7" stroke="#b02070" stroke-width="1.500"/><path d="M1277 212h5" stroke="#703080" stroke-dasharray="1 1"/>
<path d="M1277 247h5v13h-11v-4h5z" fill="#b03090"/><path d="M1268 257h10v4h-10z" fill="#6a2a80"/>
<rect x="1270" y="268" width="9" height="14" fill="#c83c90"/><rect x="1272" y="272" width="5" height="6" fill="#7a3a90"/>
<rect x="1270" y="290" width="9" height="13" fill="#b82c88"/><rect x="1272" y="288" width="4" height="4" fill="#6a2a80"/>
<path d="M1271 310h9l-1 10-3 5h-3z" fill="#6a3090"/><path d="M1277 310h3v6h-3z" fill="#c83c90"/>
<rect x="1268" y="331" width="14" height="14" fill="#a03088"/><path d="M1269 335h12M1269 339h12" stroke="#5a2070"/>
<path d="M1272 352h7v14h-5z" fill="#7a3090"/><rect x="1272" y="352" width="6" height="4" fill="#c83c90"/>
<rect x="1272" y="373" width="6" height="14" fill="#7a3aa0"/><rect x="1272" y="373" width="9" height="3" fill="#c83c90"/>
<rect x="1268" y="394" width="14" height="14" fill="#c81c78"/><rect x="1272" y="398" width="8" height="8" fill="#8a1060"/>
<path d="M1268 421h4" stroke="#a03088" stroke-width="1.500"/><path d="M1276 427l3-6 3 6z" fill="#7a4aa0"/>
<path d="M1268 440l14 3v2l-12-1z" fill="#5a2080"/>
<rect x="1269" y="457" width="12" height="12" rx="3" fill="#5a1a70"/><rect x="1273" y="462" width="8" height="9" fill="#3a1050"/>
<rect x="1267" y="525" width="16" height="2" fill="#e8407a"/><path d="M1271 522l6 3" stroke="#e8407a"/>
<ellipse cx="1275" cy="548" rx="7" ry="3" fill="#8a1a68"/>
<path d="M1268 567l14 2M1274 566l4-1" stroke="#4a2070" stroke-width="1.200"/>
<path d="M1268 592l14-3v5l-14 1z" fill="#ee5a98"/>
<ellipse cx="1275" cy="612" rx="6" ry="3" fill="#4a1a70"/><rect x="1273" y="606" width="3" height="1" fill="#a06090"/>
<path d="M1271 637a4 3 0 0 1 8 0z" fill="#6a90c8"/><rect x="1274" y="625" width="3" height="2" fill="#c04080"/>
<rect x="1267" y="650" width="16" height="6" fill="#f45a98"/>
<circle cx="1274" cy="673" r="6" fill="#f0d8ec"/>
<rect x="1267" y="688" width="16" height="2" fill="#111"/><rect x="1267" y="691" width="16" height="2" fill="#555"/><rect x="1267" y="694" width="16" height="4" fill="#e0407a"/>
<rect x="1267" y="710" width="16" height="11" fill="#000"/>
</g>
<!-- dashed underline on Layer 8 -->
<path d="M1289 197.500h28" stroke="#ddd" stroke-dasharray="2 1"/>
<!-- names -->
<g font-size="10.500" fill="#dcdcdc">
<text x="1289" y="90" fill="#eee">Preview</text><text x="1289" y="111">Layer 55</text><text x="1289" y="132">lights</text><text x="1289" y="153">Layer 27</text><text x="1289" y="174">Layer 43</text><text x="1289" y="195">Layer 8</text><text x="1289" y="216">Layer 37</text><text x="1289" y="237">Layer 36</text><text x="1289" y="258">Hilton</text><text x="1289" y="279">1</text><text x="1289" y="300">Layer 24</text><text x="1289" y="321">Layer 38</text><text x="1289" y="342">Layer 45</text><text x="1289" y="363">Layer 46</text><text x="1289" y="384">Layer 48</text><text x="1289" y="405">Layer 49</text><text x="1289" y="426">Layer 50</text><text x="1289" y="447">Nile</text><text x="1289" y="468">Layer 47</text><text x="1289" y="489">Layer 44</text><text x="1289" y="510">Layer 40</text><text x="1289" y="531">Layer 51</text><text x="1289" y="552">Layer 52</text><text x="1289" y="573">Layer 35</text><text x="1289" y="594">rays</text><text x="1289" y="615">3 Cairo</text><text x="1289" y="636">2 cairo</text><text x="1289" y="657">Layer 53</text><text x="1289" y="678">CAIRO</text><text x="1289" y="699">Layer 42</text><text x="1289" y="720">Layer 6</text><text x="1289" y="741">Layer 1</text>
</g>
<!-- target circles -->
<g fill="none" stroke="#c8c8c8" stroke-width="1">
<circle cx="1407" cy="86" r="3.500"/><circle cx="1407" cy="128" r="3.500"/><circle cx="1407" cy="149" r="3.500"/><circle cx="1407" cy="170" r="3.500"/><circle cx="1407" cy="191" r="3.500"/><circle cx="1407" cy="212" r="3.500"/><circle cx="1407" cy="233" r="3.500"/><circle cx="1407" cy="254" r="3.500"/><circle cx="1407" cy="275" r="3.500"/><circle cx="1407" cy="296" r="3.500"/><circle cx="1407" cy="317" r="3.500"/><circle cx="1407" cy="338" r="3.500"/><circle cx="1407" cy="359" r="3.500"/><circle cx="1407" cy="380" r="3.500"/><circle cx="1407" cy="401" r="3.500"/><circle cx="1407" cy="422" r="3.500"/><circle cx="1407" cy="443" r="3.500"/><circle cx="1407" cy="464" r="3.500"/><circle cx="1407" cy="485" r="3.500"/><circle cx="1407" cy="506" r="3.500"/><circle cx="1407" cy="527" r="3.500"/><circle cx="1407" cy="548" r="3.500"/><circle cx="1407" cy="569" r="3.500"/><circle cx="1407" cy="590" r="3.500"/><circle cx="1407" cy="611" r="3.500"/><circle cx="1407" cy="632" r="3.500"/><circle cx="1407" cy="653" r="3.500"/><circle cx="1407" cy="695" r="3.500"/><circle cx="1407" cy="716" r="3.500"/><circle cx="1407" cy="737" r="3.500"/>
</g>
<circle cx="1407" cy="107" r="4" fill="#8a8a8a" stroke="#aaa" stroke-width=".7"/><circle cx="1407" cy="674" r="4" fill="#8a8a8a" stroke="#aaa" stroke-width=".7"/>
<rect x="1417.500" y="82.500" width="7" height="7" fill="#5c0f60" stroke="#111"/>
<!-- panel footer -->
<text x="1193" y="830" font-size="11" fill="#b0b0b0" textLength="30">32 L...</text>
<path d="M1275 820h-6v10h10v-5M1274 826l6-6M1277 820h3v3" fill="none" stroke="#bbb"/>
<circle cx="1302" cy="824" r="3.800" fill="none" stroke="#bbb" stroke-width="1.200"/><path d="M1299 827l-4 4" stroke="#bbb" stroke-width="1.500"/>
<rect x="1321.500" y="821.500" width="7" height="7" fill="#999" stroke="#bbb"/><rect x="1324.500" y="824.500" width="7" height="7" fill="none" stroke="#999"/>
<path d="M1345 822l4-3v2h2v-2l7 0v11h-9v-3l-2 0v2z" fill="#bbb"/>
<path d="M1374 824l5-4h9v10h-9v-4h-5z" fill="#bbb"/>
<path d="M1399 822h11M1402 822v-2h5v2M1400.500 823v8.500h8v-8.500M1403 825v5M1406 825v5" fill="none" stroke="#bbb"/>
</svg>
</body></html>
